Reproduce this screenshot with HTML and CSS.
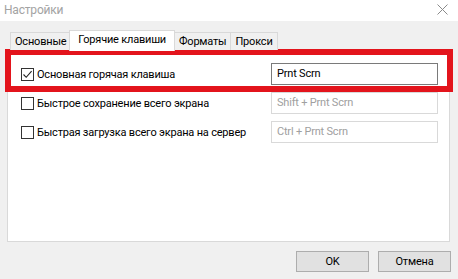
FILE: index.html
```html
<!DOCTYPE html>
<html lang="ru">
<head>
  <meta charset="UTF-8" />
  <title>Настройки</title>
  <link rel="stylesheet" href="styles.css">
</head>
<body>
  <div class="window">
    <div class="titlebar">
      <span class="title">Настройки</span>
      <svg class="close" width="11" height="11" viewBox="0 0 11 11">
        <path d="M0.5 0.5 L10.5 10.5 M10.5 0.5 L0.5 10.5" stroke="#8a8a8a" stroke-width="1" fill="none"/>
      </svg>
    </div>

    <div class="content">
      <div class="tabs">
        <div class="tab">Основные</div>
        <div class="tab selected">Горячие клавиши</div>
        <div class="tab">Форматы</div>
        <div class="tab">Прокси</div>
      </div>

      <div class="panel">
        <div class="highlight"></div>

        <div class="row">
          <label class="check">
            <span class="box">
              <svg width="11" height="11" viewBox="0 0 11 11">
                <path d="M1.5 5.5 L4.2 8.3 L9.6 2.2" stroke="#222" stroke-width="1.1" fill="none"/>
              </svg>
            </span>
            Основная горячая клавиша
          </label>
          <div class="field active">Prnt Scrn</div>
        </div>

        <div class="row">
          <label class="check"><span class="box"></span>Быстрое сохранение всего экрана</label>
          <div class="field">Shift + Prnt Scrn</div>
        </div>

        <div class="row">
          <label class="check"><span class="box"></span>Быстрая загрузка всего экрана на сервер</label>
          <div class="field">Ctrl + Prnt Scrn</div>
        </div>
      </div>

      <div class="buttons">
        <button class="btn">OK</button>
        <button class="btn">Отмена</button>
      </div>
    </div>
  </div>
</body>
</html>
```

FILE: styles.css
```css
* {
  box-sizing: border-box;
  margin: 0;
  padding: 0;
}

body {
  font-family: Roboto, 'Liberation Sans', sans-serif;
  font-size: 11px;
  letter-spacing: -0.2px;
  color: #000;
  background: #f0f0f0;
}

.window {
  width: 458px;
  height: 279px;
  background: #f0f0f0;
}

.titlebar {
  height: 21px;
  background: #fff;
  display: flex;
  justify-content: space-between;
  align-items: center;
  padding: 0 10px 2px 4px;
}

.title {
  font-size: 12px;
  color: #a3a3a3;
}

.close {
  display: block;
}

.content {
  padding-top: 9px;
}

.tabs {
  display: flex;
  align-items: flex-end;
  height: 20px;
  padding-left: 10px;
  position: relative;
  z-index: 1;
}

.tab {
  height: 18px;
  line-height: 18px;
  padding: 0 4px;
  border: 1px solid #d9d9d9;
  border-bottom: none;
  background: #f0f0f0;
  margin-right: -1px;
}

.tab.selected {
  height: 21px;
  line-height: 17px;
  margin: 0 -1px -1px -1px;
  padding: 0 8px;
  background: #fff;
  position: relative;
}

.panel {
  position: relative;
  margin: 0 8px 0 7px;
  height: 192px;
  background: #fff;
  border: 1px solid #d9d9d9;
  padding: 12px 11px 0 13px;
  display: flex;
  flex-direction: column;
  gap: 7px;
}

.highlight {
  position: absolute;
  left: -3px;
  top: -2px;
  width: 448px;
  height: 43px;
  border: 6px solid #e3141c;
}

.row {
  display: grid;
  grid-template-columns: 1fr 167px;
  align-items: center;
  height: 22px;
}

.check {
  display: flex;
  align-items: center;
  gap: 3px;
  white-space: nowrap;
}

.box {
  width: 13px;
  height: 13px;
  border: 1px solid #333;
  background: #fff;
  display: flex;
  align-items: center;
  justify-content: center;
}

.field {
  height: 22px;
  line-height: 20px;
  padding: 0 5px;
  border: 1px solid #d9d9d9;
  color: #a0a0a0;
  background: #fff;
}

.field.active {
  border-color: #7a7a7a;
  color: #000;
}

.buttons {
  display: flex;
  justify-content: flex-end;
  gap: 9px;
  margin-top: 9px;
  padding-right: 7px;
}

.btn {
  width: 73px;
  height: 21px;
  background: #e1e1e1;
  border: 1px solid #adadad;
  font-family: inherit;
  font-size: 11px;
  letter-spacing: -0.2px;
  color: #000;
}
```
